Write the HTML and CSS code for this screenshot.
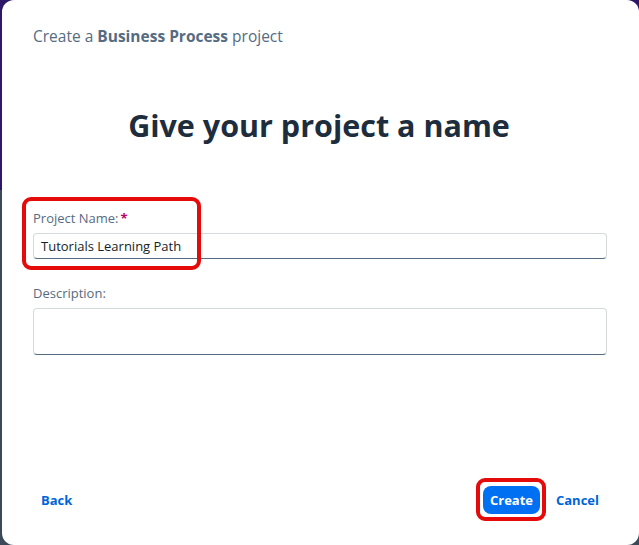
FILE: index.html
```html
<!DOCTYPE html>
<html>
<head>
<meta charset="utf-8">
<link rel="stylesheet" href="styles.css">
</head>
<body>
<div class="dialog">
  <div class="subtitle">Create a <b>Business Process</b> project</div>
  <h1 class="title">Give your project a name</h1>
  <div class="form">
    <div class="field">
      <label class="label">Project Name:<span class="req">*</span></label>
      <div class="input">Tutorials Learning Path</div>
      <div class="mark mark-name"></div>
    </div>
    <div class="field field-desc">
      <label class="label">Description:</label>
      <div class="textarea"></div>
    </div>
  </div>
  <div class="footer">
    <a class="link">Back</a>
    <div class="actions">
      <span class="create-wrap"><button class="btn-create">Create</button><span class="mark mark-create"></span></span>
      <a class="link">Cancel</a>
    </div>
  </div>
</div>
</body>
</html>
```
FILE: styles.css
```css
html, body {
  margin: 0;
  height: 545px;
  overflow: hidden;
}
body {
  background: linear-gradient(#2d1868 0, #2d1868 190px, #3c4a58 190px, #3c4a58 100%);
  font-family: "Open Sans", "Liberation Sans", sans-serif;
}
.dialog {
  margin-left: 2px;
  width: 637px;
  height: 545px;
  background: #fff;
  border-radius: 12px;
  box-sizing: border-box;
  padding: 26px 32px 0 31px;
  display: flex;
  flex-direction: column;
}
.subtitle {
  font-size: 15.5px;
  line-height: 20px;
  color: #556b82;
}
.subtitle b {
  font-weight: 700;
}
.title {
  margin: 61px 0 0;
  text-align: center;
  font-family: "Open Sans", sans-serif;
  font-weight: 700;
  font-size: 30.5px;
  line-height: 36px;
  color: #1d2d3e;
  padding-right: 2px;
}
.form {
  margin-top: 66px;
  display: flex;
  flex-direction: column;
}
.field {
  position: relative;
  display: flex;
  flex-direction: column;
}
.field-desc {
  margin-top: 25px;
}
.label {
  font-size: 13px;
  line-height: 18px;
  color: #556b82;
  margin-bottom: 6px;
}
.req {
  color: #ba066c;
  font-weight: 700;
  margin-left: 2px;
}
.input, .textarea {
  border: 1px solid #d5dadd;
  border-bottom-color: #556b82;
  border-radius: 4px;
  background: #fff;
  box-sizing: border-box;
}
.input {
  height: 26px;
  padding: 0 7px;
  font-size: 13px;
  line-height: 24px;
  color: #131e29;
}
.textarea {
  height: 47px;
}
.mark {
  position: absolute;
  border: 4px solid #e60b0b;
  border-radius: 9px;
  box-sizing: border-box;
  pointer-events: none;
}
.mark-name {
  left: -11px;
  top: -12px;
  width: 179px;
  height: 73px;
}
.footer {
  margin-top: auto;
  height: 59px;
  display: flex;
  align-items: flex-start;
  justify-content: space-between;
  padding: 0 8px 0 8px;
  box-sizing: border-box;
}
.link {
  font-size: 13px;
  font-weight: 700;
  color: #0064d9;
  line-height: 28px;
}
.actions {
  display: flex;
  align-items: center;
  gap: 16px;
}
.create-wrap {
  position: relative;
  display: inline-flex;
}
.btn-create {
  height: 28px;
  width: 57px;
  border: none;
  border-radius: 8px;
  background: #0070f2;
  color: #fff;
  font-family: "Open Sans", sans-serif;
  font-weight: 700;
  font-size: 13px;
  padding: 0;
}
.mark-create {
  left: -7px;
  top: -8px;
  width: 70px;
  height: 43px;
}
```
